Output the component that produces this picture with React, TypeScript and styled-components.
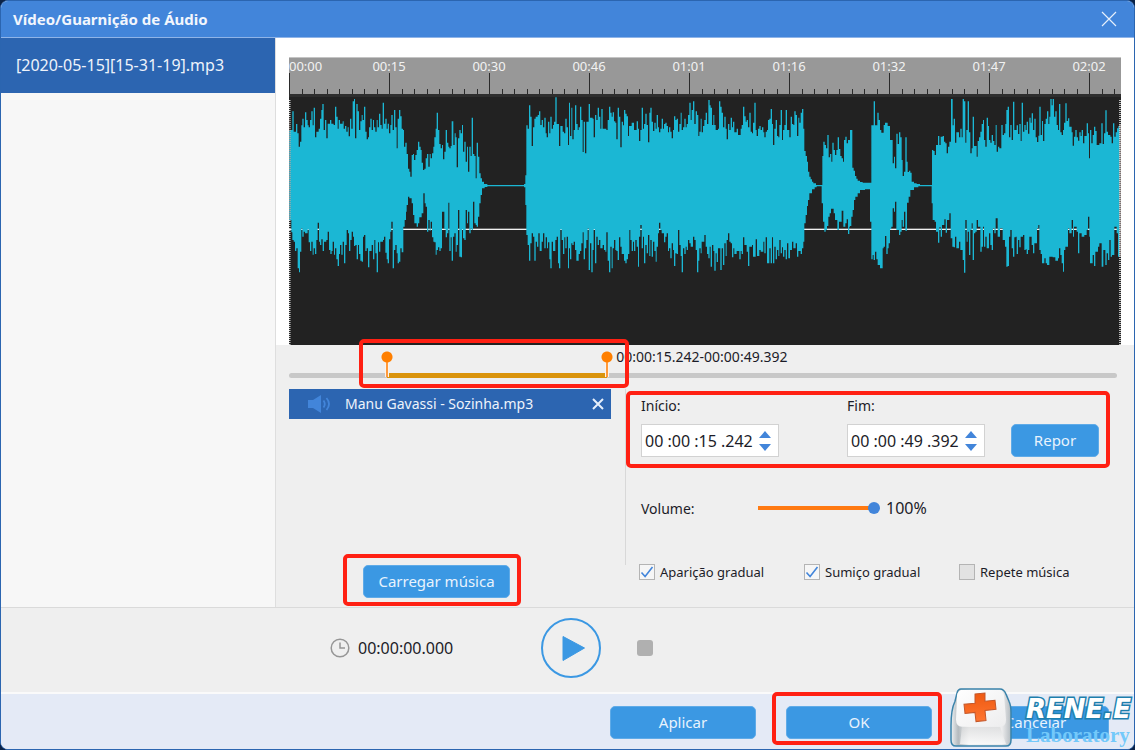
import React, { useState } from "react";
import styled, { createGlobalStyle } from "styled-components";

const GlobalStyle = createGlobalStyle`
  * { box-sizing: border-box; }
  body { margin: 0; background: #0b2348; }
  body, button, input { font-family: "Noto Sans", "Open Sans", sans-serif; }
  button { cursor: pointer; }
`;

/* ---------- window frame ---------- */

const Window = styled.div`
  position: relative;
  min-height: 100vh;
  display: flex;
  flex-direction: column;
  overflow: hidden;
  border: 1px solid #2b65b0;
  border-radius: 8px;
  background: #efefef;
  color: #1c1c28;
`;

const TitleBar = styled.header`
  display: flex;
  align-items: center;
  justify-content: space-between;
  height: 37px;
  padding: 0 17px 0 12px;
  background: #4285da;
  border-bottom: 1px solid #8fb4e8;
`;

const Title = styled.h1`
  margin: 0;
  font-size: 15px;
  line-height: 20px;
  font-weight: 700;
  color: #f2f6fd;
`;

const IconButton = styled.button`
  display: flex;
  align-items: center;
  justify-content: center;
  padding: 0;
  border: 0;
  background: none;
  color: inherit;
`;

const Body = styled.div`
  flex: 1;
  display: flex;
`;

const Sidebar = styled.aside`
  flex: none;
  width: 275px;
  background: #f7f7f7;
  border-right: 1px solid #dedede;
`;

const FileItem = styled.div`
  height: 55px;
  padding: 0 15px;
  background: #2c65b1;
  color: #eef3fb;
  font-size: 16px;
  line-height: 55px;
`;

const Editor = styled.main`
  flex: 1;
  min-width: 0;
  display: flex;
  flex-direction: column;
`;

/* ---------- wave form ---------- */

const WavePane = styled.section`
  padding: 19px 13px 0;
  background: #fff;
`;

const Ruler = styled.div`
  position: relative;
  overflow: hidden;
  height: 40px;
  background: #989898;
  border-top: 1px solid #c4c4c4;
  border-bottom: 3px solid #2e2e2e;
`;

const RulerMarks = styled.svg`
  display: block;
  width: 100%;
  height: 36px;
`;

const RulerLabel = styled.span<{ $first?: boolean }>`
  position: absolute;
  top: 0;
  transform: ${(p) => (p.$first ? "none" : "translateX(-50%)")};
  font-size: 13px;
  line-height: 16px;
  color: #f2f2f2;
`;

const WaveCanvas = styled.svg`
  display: block;
  width: 100%;
  height: 248px;
  background: #222;
`;

/* ---------- selection range ---------- */

const RangeArea = styled.div`
  position: relative;
  height: 44px;
  margin: 0 17px 0 13px;
`;

const RangeText = styled.div`
  font-size: 14px;
  line-height: 23px;
  white-space: nowrap;
`;

const RangeTrack = styled.div`
  position: relative;
  height: 5px;
  margin-top: 5px;
  border-radius: 3px;
  background: #c8c8c8;
`;

const RangeFill = styled.div`
  position: absolute;
  top: 0;
  height: 5px;
  background: #da940c;
`;

const RangeInput = styled.input`
  position: absolute;
  left: -7px;
  top: 3px;
  width: calc(100% + 14px);
  height: 30px;
  margin: 0;
  appearance: none;
  background: none;
  pointer-events: none;

  &::-webkit-slider-thumb {
    appearance: none;
    pointer-events: auto;
    width: 14px;
    height: 28px;
    background:
      radial-gradient(circle at 7px 8px, #ff7f00 5px, transparent 6px),
      linear-gradient(#ff9a3c, #ff9a3c) 6px 12px / 2px 16px no-repeat,
      linear-gradient(#fbf3ea, #fbf3ea) 5px 12px / 4px 16px no-repeat;
  }
`;

const Marker = styled.div<{ $inset: string }>`
  position: absolute;
  inset: ${(p) => p.$inset};
  border: 4px solid #ff2013;
  border-radius: 5px;
  pointer-events: none;
`;

/* ---------- controls ---------- */

const Controls = styled.div`
  flex: 1;
  display: flex;
  padding: 0 13px 0;
`;

const MusicColumn = styled.section`
  flex: none;
  width: 322px;
  display: flex;
  flex-direction: column;
  justify-content: space-between;
  padding-bottom: 9px;
`;

const MusicItem = styled.div`
  display: flex;
  align-items: center;
  height: 30px;
  padding: 0 7px 0 19px;
  background: #2c65b1;
  color: #eef3fb;
`;

const MusicName = styled.span`
  flex: 1;
  padding-left: 14px;
  font-size: 14px;
  line-height: 20px;
`;

const Marked = styled.div<{ $left?: number }>`
  position: relative;
  display: flex;
  align-self: flex-start;
  margin-left: ${(p) => p.$left ?? 0}px;
`;

const PushButton = styled.button<{ $width: number }>`
  width: ${(p) => p.$width}px;
  height: 33px;
  padding: 0 0 2px;
  border: 1px solid #5fabe8;
  border-radius: 5px;
  background: #3b98e3;
  color: #e8f3fd;
  font-size: 15px;
  line-height: 20px;
`;

const Divider = styled.div`
  flex: none;
  width: 1px;
  height: 176px;
  margin: 0 13px 0 14px;
  background: #d8d8d8;
`;

const Settings = styled.section`
  flex: 1;
  min-width: 0;
`;

const TimeRow = styled.div`
  position: relative;
  display: flex;
  align-items: flex-end;
  height: 68px;
  padding-left: 2px;
`;

const Field = styled.div`
  width: 206px;
`;

const FieldLabel = styled.label`
  display: block;
  font-size: 14px;
  line-height: 18px;
`;

const TimeBox = styled.div`
  display: flex;
  align-items: center;
  width: 138px;
  height: 33px;
  margin-top: 9px;
  border: 1px solid #d2d2d2;
  background: #fff;
`;

const TimeInput = styled.input`
  width: 117px;
  padding: 0 0 0 3px;
  border: 0;
  outline: 0;
  background: none;
  color: #1c1c28;
  font-size: 16px;
`;

const Steppers = styled.div`
  display: flex;
  flex-direction: column;
  gap: 6px;
`;

const ResetSlot = styled.div`
  display: flex;
  margin-left: -42px;
`;

const VolumeRow = styled.div`
  display: flex;
  align-items: center;
  height: 24px;
  margin-top: 39px;
  padding-left: 2px;
`;

const VolumeLabel = styled.label`
  width: 117px;
  font-size: 14px;
`;

const VolumeValue = styled.span`
  font-size: 16px;
  line-height: 20px;
`;

const VolumeInput = styled.input`
  width: 122px;
  height: 12px;
  margin: 0 6px 0 0;
  appearance: none;
  background: linear-gradient(#ff7a12, #ff7a12) 0 4px / 118px 4px no-repeat;

  &::-webkit-slider-thumb {
    appearance: none;
    width: 12px;
    height: 12px;
    border-radius: 50%;
    background: #4285da;
  }
`;

const Checks = styled.div`
  display: flex;
  margin-top: 43px;
`;

const CheckLabel = styled.label<{ $width: number }>`
  display: flex;
  align-items: center;
  gap: 5px;
  width: ${(p) => p.$width}px;
  font-size: 13px;
  line-height: 18px;
  white-space: nowrap;
`;

const CheckBox = styled.input`
  appearance: none;
  flex: none;
  width: 16px;
  height: 16px;
  margin: 0;
  border: 1px solid #b4b4b4;
  background: #e2e2e2;

  &:checked {
    background: #f6f6f6
      url("data:image/svg+xml,%3Csvg xmlns='http://www.w3.org/2000/svg' viewBox='0 0 14 14'%3E%3Cpath d='M1.5 7.5l3.6 4L12.5 2' fill='none' stroke='%234285da' stroke-width='1.6'/%3E%3C/svg%3E");
  }
`;

/* ---------- player and footer ---------- */

const Player = styled.section`
  display: flex;
  align-items: center;
  height: 85px;
  padding: 0 0 5px 329px;
  border-top: 1px solid #dadada;
`;

const Clock = styled.div`
  display: flex;
  align-items: center;
  gap: 8px;
  width: 211px;
  font-size: 16px;
  line-height: 20px;
`;

const PlayButton = styled(IconButton)`
  width: 60px;
  height: 60px;
  margin-right: 36px;
`;

const StopButton = styled(IconButton)`
  width: 16px;
  height: 16px;
  border-radius: 3px;
  background: #b0b0b0;
`;

const Footer = styled.footer`
  display: flex;
  justify-content: flex-end;
  gap: 30px;
  height: 57px;
  padding: 12px 25px 0;
  border-top: 2px solid #fafafa;
  background: #e4eaf6;
`;

const Brand = styled.div`
  position: absolute;
  right: 0;
  bottom: 2px;
  display: flex;
  align-items: flex-end;
  pointer-events: none;
`;

const BrandText = styled.div`
  display: flex;
  flex-direction: column;
  width: 108px;
  margin-left: 14px;
  white-space: nowrap;
`;

const BrandName = styled.span`
  font: italic 700 26px/28px "DejaVu Sans", sans-serif;
  color: #fff;
  -webkit-text-stroke: 3px #1d7fae;
  paint-order: stroke fill;
`;

const BrandSub = styled.span`
  font: 700 21px/24px "Liberation Serif", serif;
  color: #73c9fa;
`;

/* ---------- data ---------- */

// Wave outline as "x level" steps: each level holds until the next x.
const UPPER = [
  {
    start: 0,
    steps:
      "27 240,37 184,41 245,48 222,52 250,56 290,60 275,64 226,67 206,71 232,75 187,79 210,83 226,86 232,90 210,94 184,98 226,101 173,105 262,109 245,116 236,120 206,124 180,127 162,131 240,135 210,139 265,143 221,150 210,154 221,161 225,165 170,169 200,173 236,176 210,180 221,188 214,191 236,195 228,199 245,203 232,206 259,210 206,214 236,218 154,222 147,225 265,229 162,233 184,237 240,241 214,245 195,248 210,252 170,256 245,260 268,264 262,267 232,271 206,275 240,279 210,282 232,286 245,290 210,293 232,297 191,301 225,305 236,308 158,312 221,316 206,320 236,323 221,327 250,331 225,334 195,338 240,342 180,346 232,350 295,353 206,357 180,361 199,365 236,369 240,372 290,376 278,380 312,384 356,388 365,391 380,395 315,399 312,402 330,406 315,410 300,414 275,418 290,422 300,425 338,429 360,433 356,437 325,441 312,445 350,449 312,452 325,456 310,460 290,463 262,467 236,470 188,474 240,478 282,482 295,486 285,489 328,493 305,497 240,501 278,505 290,508 295,512 288,515 214,520 285,524 250,527 262,530 352,534 265,538 240,542 250,546 225,549 305,553 275,557 335,561 290,564 365,568 290,572 318,575 203,579 312,583 318,587 385,590 278,594 320,598 370,602 385,606 395,612 402,622 405,732 402,736 376,739 226,743 236,747 166,751 200,755 288,759 232,763 206,767 200,773 195,777 184,781 225,785 210,789 232,793 203,797 250,800 262,804 215,808 250,811 200,815 236,819 225,822 215,826 142,830 222,837 288,841 228,848 245,852 250,856 206,860 232,864 285,867 158",
  },
  {
    start: 840,
    steps:
      "30 258,34 173,37 268,41 240,45 166,49 222,53 240,56 232,60 170,64 210,68 306,71 215,75 310,79 215,86 162,90 203,98 206,101 262,105 195,109 210,113 173,117 200,121 236,124 177,128 236,139 240,143 210,147 170,151 188,155 200,158 187,162 214,166 218,169 268,173 173,177 200,181 292,185 215,189 226,192 180,196 191,200 199,204 258,207 228,215 218,222 240,230 214,234 236,237 273,241 240,245 173,249 236,252 222,256 191,260 225,264 277,268 188,271 173,275 215,279 243,283 218,287 236,290 195,294 232,297 247,301 236,305 206,309 236,312 222,316 218,320 228,324 247,327 232,331 245,335 265,339 240,342 199,346 210,350 206,354 245,358 222,362 188,365 240,369 232,373 206,377 232,380 222,384 195,388 158,392 210,395 180,399 154,403 222,407 184,411 195,415 258,418 245,422 206,425 247,429 228,433 210,437 188,441 222,445 150,449 166,452 173,456 225,460 195,463 225,467 240,474 236,477 154,481 170,485 188,489 232,493 200,497 236,500 268,504 222,508 240,512 203,516 232,519 215,523 247,530 236,534 255,542 236,545 225,549 170,553 199,557 215,560 210,564 232,568 188,572 245,576 250,579 218,583 158,587 240,590 258,594 236,598 228,602 240,606 232,610 247,613 262,617 245,621 240,624 210,628 206,632 177,636 222,639 285,643 236,647 210,651 258,655 262,658 225,662 180,666 270,669 240,673 225,677 180,681 240,688 262,692 200,696 222,700 225,703 184,707 195,711 258,715 203,718 218,722 188,726 177,730 236,733 303,737 318,741 335,744 365,748 380,752 388,756 395,760 400,768 405,785 405,787 318,790 275,794 285,798 295,802 255,806 322,810 312,814 335,817 278,821 300,825 315,829 300,833 262,837 297,841 318,845 325,849 335,852 270,856 260,860 280,864 270",
  },
  {
    start: 1680,
    steps:
      "30 240,37 353,41 362,45 378,49 386,53 392,60 396,68 398,90 398,94 226,101 154,105 226,112 188,116 210,120 240,124 248,131 225,135 218,143 228,150 270,158 340,162 320,165 355,169 251,173 282,177 247,181 262,185 330,188 378,192 365,196 262,200 335,203 366,207 362,211 368,215 395,222 400,230 402,240 405,276 300,280 303,284 315,288 285,294 258,298 285,302 260,308 258,312 275,316 280,320 310,324 290,328 275,333 147,338 226,341 206,345 278,349 247,357 262,361 236,365 262,368 147,372 154,376 278,379 240,383 154,387 247,391 310,395 295,398 200,402 288,410 320,413 273,417 262,421 245,425 222,429 210,432 270,436 290,440 203,444 228,447 270,451 278,455 255,459 273,463 285,467 225,470 305,474 290,478 295,484 225,488 255,492 250,496 222,499 180,503 170,507 262,511 225,515 270,519 155,523 240,530 226,534 252,538 222,542 273,545 158,549 245,553 225,557 240,560 215,564 251,568 203,572 218,575 190,579 240,583 206,587 262,591 276,595 257,598 170,602 255,606 213,609 273,613 222,617 206,621 184,625 222,628 200,631 147,635 166,638 147,642 200,646 184,650 225,654 240,657 162,661 247,665 255,669 240,672 218,676 160,680 213,684 205,688 230,695 247,698 287,702 260,706 240,710 262,714 272,718 247,722 258,725 240,729 280,733 258,740 220,744 250,747 325,750 240,754 280,758 255,762 230,766 243,770 285,778 280,784 220,788 282,792 250,796 181,800 245,804 255,811 260,815 280,819 220,823 260,827 247,831 235,835 228,840 228",
  },
];

const LOWER = [
  {
    start: 0,
    steps:
      "27 510,34 547,37 570,41 575,45 603,49 595,53 655,57 667,60 605,64 535,67 560,71 545,75 550,83 538,86 577,90 603,94 575,98 614,101 595,105 612,109 570,113 518,117 575,120 585,124 568,128 603,132 575,139 570,143 545,147 600,151 612,155 603,158 575,162 614,165 595,169 628,173 648,177 612,180 585,184 614,188 575,192 640,196 585,200 540,204 550,207 603,211 570,215 545,219 560,222 588,226 585,230 628,234 585,237 612,241 632,245 635,249 560,252 555,256 603,260 595,264 652,268 603,275 585,279 628,283 570,286 610,290 667,294 577,297 605,301 575,309 570,312 560,316 608,320 628,323 640,327 568,331 545,334 515,338 655,342 600,346 585,350 610,353 640,357 635,361 595,365 607,370 530,374 510,378 485,380 465,384 440,388 445,395 460,399 495,403 520,410 530,414 520,418 502,425 490,430 430,434 460,437 470,441 545,445 510,449 542,452 515,456 562,460 575,463 577,467 614,470 600,474 592,478 603,482 595,486 485,493 538,497 562,501 550,505 458,508 603,512 562,515 632,519 560,523 550,527 605,530 585,534 480,538 620,542 622,546 538,549 565,553 570,557 480,561 520,564 485,568 550,572 535,575 540,579 455,583 520,587 525,590 530,594 500,598 460,602 435,606 415,614 411,622 409,732 412,736 465,739 555,743 585,747 632,751 580,755 550,759 560,763 632,767 575,771 590,775 550,779 603,785 575,789 550,793 595,797 562,801 595,804 577,808 628,811 655,815 575,819 603,826 570,830 560,834 640,837 655,841 538,845 570,849 612,853 562,856 595,860 560,864 655,867 595",
  },
  {
    start: 840,
    steps:
      "30 628,34 580,37 585,41 575,45 600,49 632,56 612,60 603,64 580,68 547,71 628,75 595,79 570,83 535,86 660,90 580,94 667,98 600,101 538,105 640,109 560,113 585,117 570,121 595,128 585,132 600,136 605,139 547,143 632,147 667,151 590,155 655,158 595,162 570,166 600,169 603,173 630,177 562,181 590,185 612,192 632,196 640,200 628,204 612,208 540,211 570,215 603,219 575,222 603,226 570,230 590,234 650,237 560,241 525,245 595,249 560,252 640,256 585,260 610,264 555,268 618,271 570,275 620,279 575,283 603,287 635,290 590,294 550,297 518,301 540,305 550,312 577,316 560,320 550,324 603,327 595,331 625,335 580,339 600,342 648,346 610,350 612,354 540,358 585,362 618,365 667,369 595,373 612,377 590,380 600,384 570,388 580,392 590,399 560,403 570,407 600,411 667,415 632,418 595,422 610,425 575,433 555,437 590,441 612,445 625,449 590,452 650,456 585,460 603,463 662,467 610,470 636,474 595,481 660,485 595,489 645,493 580,497 618,500 570,504 550,508 575,512 580,516 622,520 595,523 612,530 603,538 628,542 603,545 612,549 562,553 585,560 605,564 648,568 590,576 585,579 620,587 568,591 618,598 600,602 605,610 575,613 610,617 562,621 640,628 595,632 640,636 562,639 640,643 590,647 628,651 600,655 618,658 570,662 610,666 592,669 620,673 600,677 628,681 580,685 625,690 600,696 575,700 595,707 580,711 620,715 603,722 612,726 595,730 575,733 520,737 495,741 468,744 450,748 430,756 418,764 412,770 409,785 460,789 515,793 545,797 540,801 528,805 500,809 490,813 476,821 490,825 510,832 540,837 515,845 482,850 530,856 520,860 508,864 552,868 530",
  },
  {
    start: 1680,
    steps:
      "30 528,34 500,38 480,42 450,46 440,53 430,60 420,75 418,90 515,94 628,98 615,101 630,105 605,109 628,113 645,120 655,128 595,131 590,135 558,139 612,143 595,146 580,150 538,154 530,158 475,162 485,165 455,169 540,177 555,181 545,185 510,188 530,192 485,196 542,201 458,206 440,211 420,222 412,235 409,275 460,278 510,284 515,288 545,294 578,298 532,302 560,306 525,313 508,317 548,321 510,328 490,332 565,337 590,341 592,345 560,349 595,357 575,361 600,368 630,372 668,376 510,380 575,383 545,387 615,391 540,395 520,398 630,402 550,406 545,410 510,414 530,421 605,425 590,429 530,432 590,436 560,440 595,447 550,451 585,455 600,459 535,463 550,467 505,473 560,480 535,488 570,495 590,499 650,503 648,507 560,511 540,515 595,519 620,523 562,527 560,530 612,534 570,538 592,542 560,549 555,553 600,557 598,560 612,564 600,568 560,575 585,579 610,583 580,591 535,595 525,598 600,602 612,606 640,613 625,617 640,621 645,628 620,638 622,646 632,654 625,657 595,661 615,665 640,669 665,672 600,676 590,684 535,688 550,695 510,699 560,702 530,710 545,714 610,718 550,725 560,733 555,740 540,744 500,748 560,750 640,758 615,762 648,766 605,774 590,778 580,785 650,790 600,796 645,800 610,804 630,808 570,812 620,816 615,823 530,830 550,834 620,840 620",
  },
];

type Chunk = { start: number; steps: string };

const toPoints = (chunks: Chunk[]) => {
  const steps = chunks.flatMap((c) =>
    c.steps.split(",").map((s) => {
      const [x, y] = s.split(" ").map(Number);
      return [c.start + x, y];
    })
  );
  return steps.flatMap(([x, y], i) => {
    const next = steps[i + 1];
    return next ? [[x, y], [next[0], y]] : [[x, y]];
  });
};

const WAVE_POINTS = [...toPoints(UPPER), ...toPoints(LOWER).reverse()]
  .map((p) => p.join(","))
  .join(" ");

const RULER_LABELS = ["00:00", "00:15", "00:30", "00:46", "01:01", "01:16", "01:32", "01:47", "02:02"];
const MINOR_TICKS = Array.from({ length: 67 }, (_, i) => i);
const DURATION = 128.5;

const formatTime = (seconds: number) => {
  const ms = Math.round(seconds * 1000);
  const two = (n: number) => String(n).padStart(2, "0");
  return `${two(Math.floor(ms / 3600000))}:${two(Math.floor(ms / 60000) % 60)}:${two(
    Math.floor(ms / 1000) % 60
  )}.${String(ms % 1000).padStart(3, "0")}`;
};

const spaced = (time: string) => time.replace(/:/g, " :").replace(".", " .");

/* ---------- parts ---------- */

function Cross({ size, width }: { size: number; width: number }) {
  return (
    <svg width={size} height={size} viewBox={`0 0 ${size} ${size}`} aria-hidden="true">
      <path
        d={`M1 1L${size - 1} ${size - 1}M${size - 1} 1L1 ${size - 1}`}
        stroke="#e6effb"
        strokeWidth={width}
        fill="none"
      />
    </svg>
  );
}

function TimeField({
  id,
  label,
  value,
  onStep,
}: {
  id: string;
  label: string;
  value: number;
  onStep: (delta: number) => void;
}) {
  return (
    <Field>
      <FieldLabel htmlFor={id}>{label}</FieldLabel>
      <TimeBox>
        <TimeInput id={id} type="text" readOnly value={spaced(formatTime(value))} />
        <Steppers>
          <IconButton aria-label="Aumentar" onClick={() => onStep(1)}>
            <svg width="12" height="7" viewBox="0 0 12 7">
              <path d="M6 0L12 7H0Z" fill="#4285da" />
            </svg>
          </IconButton>
          <IconButton aria-label="Diminuir" onClick={() => onStep(-1)}>
            <svg width="12" height="7" viewBox="0 0 12 7">
              <path d="M6 7L12 0H0Z" fill="#4285da" />
            </svg>
          </IconButton>
        </Steppers>
      </TimeBox>
    </Field>
  );
}

function KeyLogo() {
  return (
    <svg width="62" height="59" viewBox="0 0 62 58" preserveAspectRatio="none" aria-hidden="true">
      <defs>
        <linearGradient id="keySide" x1="0" x2="1" y1="0" y2="0">
          <stop offset="0" stopColor="#eef1f3" />
          <stop offset="0.120" stopColor="#b4babe" />
          <stop offset="0.300" stopColor="#f4f4f4" />
          <stop offset="0.850" stopColor="#ececed" />
          <stop offset="1" stopColor="#b4bbc0" />
        </linearGradient>
        <linearGradient id="keyTop" x1="0" x2="1" y1="0" y2="1">
          <stop offset="0" stopColor="#ffffff" />
          <stop offset="1" stopColor="#ededee" />
        </linearGradient>
        <linearGradient id="keyFront" x1="0" x2="0" y1="0" y2="1">
          <stop offset="0" stopColor="#d9dadb" />
          <stop offset="1" stopColor="#fbfbfb" />
        </linearGradient>
        <linearGradient id="plus" x1="0" x2="0" y1="0" y2="1">
          <stop offset="0" stopColor="#ee5a12" />
          <stop offset="1" stopColor="#ff7530" />
        </linearGradient>
      </defs>
      <path
        d="M11 1H50Q54 1 56 6L59 13Q61 17 61 24V51Q61 57 56 57H6Q1 57 1 51V37Q1 21 5 13L7 5Q8 1 11 1Z"
        fill="url(#keySide)"
        stroke="#3a83aa"
        strokeWidth="1.500"
      />
      <path d="M12 38H50L56 55H10Z" fill="url(#keyFront)" opacity="0.700" />
      <path d="M11 2H50Q53 3 54 7L56 31Q56 38 50 38H12Q6 38 6 31L7 7Q8 3 11 2Z" fill="url(#keyTop)" />
      <path
        d="M25 6L35 5V13L45 12L46 21L35 22L36 32L26 33L25 24L15 25L14 16L25 15Z"
        fill="url(#plus)"
        stroke="#c4572a"
      />
    </svg>
  );
}

export default function App() {
  const [start, setStart] = useState(15.242);
  const [end, setEnd] = useState(49.392);
  const startShare = (start / DURATION) * 100;
  const endShare = (end / DURATION) * 100;

  return (
    <>
      <GlobalStyle />
      <Window>
        <TitleBar>
          <Title>Vídeo/Guarnição de Áudio</Title>
          <IconButton aria-label="Fechar">
            <Cross size={16} width={1.2} />
          </IconButton>
        </TitleBar>

        <Body>
          <Sidebar>
            <FileItem>[2020-05-15][15-31-19].mp3</FileItem>
          </Sidebar>

          <Editor>
            <WavePane>
              <Ruler>
                {RULER_LABELS.map((label, i) => (
                  <RulerLabel key={label} $first={i === 0} style={{ left: `${(i * 10000) / 832}%` }}>
                    {label}
                  </RulerLabel>
                ))}
                <RulerMarks viewBox="0 0 832 36" preserveAspectRatio="none" aria-hidden="true">
                  {MINOR_TICKS.map((i) => (
                    <rect
                      key={i}
                      x={Math.round(i * 12.5)}
                      y={i % 8 === 0 ? 15 : 31}
                      width="1"
                      height={i % 8 === 0 ? 21 : 5}
                      fill="#2a2a2a"
                    />
                  ))}
                </RulerMarks>
              </Ruler>
              <WaveCanvas viewBox="27 141 2496 744" preserveAspectRatio="none" aria-label="Forma de onda">
                <rect x="27" y="536" width="2496" height="4" fill="#f0f0f0" />
                <polygon points={WAVE_POINTS} fill="#1bb7d4" />
                <path d="M29 150V885M2520 150V885" stroke="#d8d8d8" strokeWidth="5" strokeDasharray="3 3" />
                <path d="M29 205V510M2520 225V620" stroke="#8f7f7c" strokeWidth="5" strokeDasharray="3 3" />
              </WaveCanvas>
            </WavePane>

            <RangeArea>
              <RangeText style={{ paddingLeft: `calc(${endShare}% + 9px)` }}>
                {formatTime(start)}-{formatTime(end)}
              </RangeText>
              <RangeTrack>
                <RangeFill style={{ left: `${startShare}%`, width: `${endShare - startShare}%` }}>
                  <Marker $inset="-34px -22px -10px -28px" />
                </RangeFill>
              </RangeTrack>
              <RangeInput
                type="range"
                aria-label="Início do trecho"
                min={0}
                max={DURATION}
                step={0.001}
                value={start}
                onChange={(e) => setStart(Math.min(Number(e.target.value), end))}
              />
              <RangeInput
                type="range"
                aria-label="Fim do trecho"
                min={0}
                max={DURATION}
                step={0.001}
                value={end}
                onChange={(e) => setEnd(Math.max(Number(e.target.value), start))}
              />
            </RangeArea>

            <Controls>
              <MusicColumn>
                <MusicItem>
                  <svg width="23" height="18" viewBox="0 0 23 18" aria-hidden="true">
                    <path d="M0 5H5L13 0V18L5 13H0Z" fill="#4285da" />
                    <path
                      d="M15.500 5.500Q18 9 15.500 12.500M18.500 3Q23.500 9 18.500 15"
                      fill="none"
                      stroke="#4285da"
                      strokeWidth="1.800"
                    />
                  </svg>
                  <MusicName>Manu Gavassi - Sozinha.mp3</MusicName>
                  <IconButton aria-label="Remover música">
                    <Cross size={12} width={2} />
                  </IconButton>
                </MusicItem>
                <Marked $left={74}>
                  <PushButton $width={147}>Carregar música</PushButton>
                  <Marker $inset="-11px -11px -8px -20px" />
                </Marked>
              </MusicColumn>

              <Divider />

              <Settings>
                <TimeRow>
                  <TimeField
                    id="inicio"
                    label="Início:"
                    value={start}
                    onStep={(d) => setStart(Math.max(0, Math.min(start + d, end)))}
                  />
                  <TimeField
                    id="fim"
                    label="Fim:"
                    value={end}
                    onStep={(d) => setEnd(Math.min(DURATION, Math.max(end + d, start)))}
                  />
                  <ResetSlot>
                    <PushButton
                      $width={88}
                      onClick={() => {
                        setStart(0);
                        setEnd(DURATION);
                      }}
                    >
                      Repor
                    </PushButton>
                  </ResetSlot>
                  <Marker $inset="2px 11px -11px -13px" />
                </TimeRow>

                <VolumeRow>
                  <VolumeLabel htmlFor="volume">Volume:</VolumeLabel>
                  <VolumeInput id="volume" type="range" min={0} max={100} defaultValue={100} />
                  <VolumeValue>100%</VolumeValue>
                </VolumeRow>

                <Checks>
                  <CheckLabel $width={165}>
                    <CheckBox type="checkbox" defaultChecked />
                    Aparição gradual
                  </CheckLabel>
                  <CheckLabel $width={155}>
                    <CheckBox type="checkbox" defaultChecked />
                    Sumiço gradual
                  </CheckLabel>
                  <CheckLabel $width={120}>
                    <CheckBox type="checkbox" />
                    Repete música
                  </CheckLabel>
                </Checks>
              </Settings>
            </Controls>
          </Editor>
        </Body>

        <Player>
          <Clock>
            <svg width="20" height="20" viewBox="0 0 20 20" fill="none" stroke="#969696" aria-hidden="true">
              <circle cx="10" cy="10" r="8.800" strokeWidth="1.500" />
              <path d="M10 4.500V10H15" strokeWidth="1.500" />
            </svg>
            <span>00:00:00.000</span>
          </Clock>
          <PlayButton aria-label="Reproduzir">
            <svg width="60" height="60" viewBox="0 0 60 60">
              <circle cx="30" cy="30" r="29" fill="none" stroke="#3b98e3" strokeWidth="2" />
              <path d="M22 18.500L43.500 30L22 42.500Z" fill="#3b98e3" stroke="#3b98e3" strokeLinejoin="round" />
            </svg>
          </PlayButton>
          <StopButton aria-label="Parar" />
        </Player>

        <Footer>
          <PushButton $width={146}>Aplicar</PushButton>
          <Marked>
            <PushButton $width={146}>OK</PushButton>
            <Marker $inset="-14px -10px -6px -14px" />
          </Marked>
          <PushButton $width={147}>Cancelar</PushButton>
        </Footer>

        <Brand>
          <KeyLogo />
          <BrandText>
            <BrandName>RENE.E</BrandName>
            <BrandSub>Laboratory</BrandSub>
          </BrandText>
        </Brand>
      </Window>
    </>
  );
}
